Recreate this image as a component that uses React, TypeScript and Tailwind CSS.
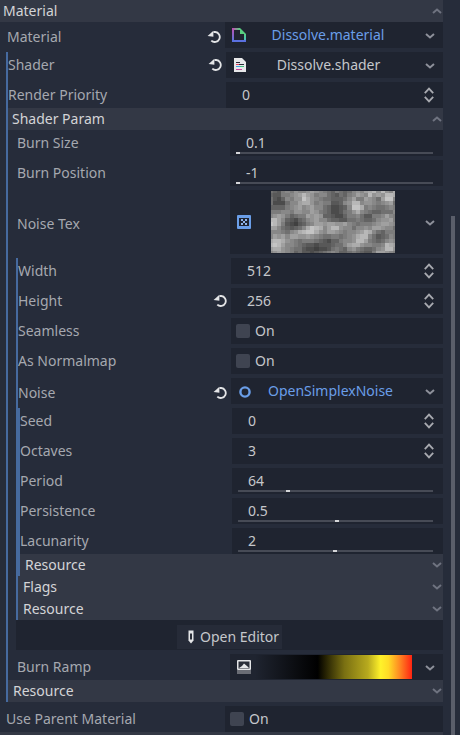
import type { ReactNode } from 'react';

const NOISE = [
  '6547879889a987657656898abc9c98b',
  '5447789aca97886546578a98c9a9ccb',
  '64358799db9876655568a77a986add8',
  '6333688abb9787744589cc8998789a6',
  '5555789a89a886533458ddb78766787',
  '7778879988a9765334679b876556668',
  '89a975677a9a9554335778644778a87',
  'cca85435689a88655446676556899a7',
  'dca74324578aa9aa99a87677789aa98',
  'aa8654568bdcb8acc98868898aa9886',
  '8887689bcddb98aa987889acb865777',
  '8a9a8aa99a98766776789bcc8645687',
  'bccb98767776543557889cca7656898',
  'cdca887654434445668abb988778cba',
  'abb9876643323346765897655689cc9',
  '89a98756443456787556765447aa987',
];

const Field = ({ width, children, className = '' }: { width: string; children?: ReactNode; className?: string }) => (
  <div className={`${width} shrink-0 bg-[#1f2430] ${className}`}>{children}</div>
);

const Reset = ({ className = '' }: { className?: string }) => (
  <svg width="14" height="14" viewBox="0 0 14 14" className={`shrink-0 mr-[4px] ${className}`}>
    <path d="M6.5 2H8.2a5 5 0 1 1-3.9 8.6" fill="none" stroke="#e4e5e7" strokeWidth="1.8" />
    <path d="M6.4 0.8v5.9L0.6 6z" fill="#e4e5e7" />
  </svg>
);

const Down = ({ color = '#8d909a', className = '' }: { color?: string; className?: string }) => (
  <svg width="10" height="6" viewBox="0 0 10 6" className={`shrink-0 ${className}`}>
    <path d="M1 1l4 3.5L9 1" fill="none" stroke={color} strokeWidth="2" />
  </svg>
);

const Up = ({ color = '#6f7380' }: { color?: string }) => (
  <svg width="10" height="6" viewBox="0 0 10 6" className="shrink-0">
    <path d="M1 5l4-3.5L9 5" fill="none" stroke={color} strokeWidth="2" />
  </svg>
);

const Spinner = () => (
  <svg width="10" height="16" viewBox="0 0 10 16" className="shrink-0">
    <path d="M0.8 6.2L5 1.6l4.2 4.6M0.8 9.8L5 14.4l4.2-4.6" fill="none" stroke="#a8aab0" strokeWidth="1.8" />
  </svg>
);

const Row = ({ label, reset, nudge, children }: { label: string; reset?: boolean; nudge?: boolean; children: ReactNode }) => (
  <div className="flex items-center">
    <span className={`flex-1 text-[#a5a8af] ${nudge ? 'translate-y-[2px]' : ''}`}>{label}</span>
    {reset && <Reset className={nudge ? 'translate-y-[2px]' : ''} />}
    {children}
  </div>
);

const Spin = ({ label, width, value, reset }: { label: string; width: string; value: string; reset?: boolean }) => (
  <Row label={label} reset={reset}>
    <Field width={width} className="h-[26px] flex items-center justify-between pl-[16px] pr-[9px] text-[#c5c7cb]">
      <span>{value}</span>
      <Spinner />
    </Field>
  </Row>
);

const Slider = ({ label, width, value, pos }: { label: string; width: string; value: string; pos: number }) => (
  <Row label={label}>
    <Field width={width} className="h-[26px] flex flex-col pl-[6px] pr-[10px] text-[#c5c7cb]">
      <span className="h-[22px] pl-[10px] leading-[26px]">{value}</span>
      <div className="relative h-[2px] bg-[#474b56]">
        <div className="absolute top-0 w-[4px] h-[2px] bg-[#d5d6d9]" style={{ left: pos }} />
      </div>
    </Field>
  </Row>
);

const Check = ({ label, width }: { label: string; width: string }) => (
  <Row label={label}>
    <Field width={width} className="h-[26px] flex items-center gap-[5px] pl-[5px] text-[#c5c7cb]">
      <div className="w-[14px] h-[14px] rounded-[2px] bg-[#3f4451]" />
      <span>On</span>
    </Field>
  </Row>
);

const Picker = ({ label, width, reset, nudge, text, blue, icon, pad }: { label: string; width: string; reset?: boolean; nudge?: boolean; text: string; blue?: boolean; icon: ReactNode; pad: string }) => (
  <Row label={label} reset={reset} nudge={nudge}>
    <Field width={width} className={`h-[26px] flex items-center ${pad} pr-[8px]`}>
      {icon}
      <span className={`flex-1 text-center mr-[15px] ${blue ? 'text-[#6a9ee8]' : 'text-[#c5c7cb]'}`}>{text}</span>
      <Down className="mt-[2px]" />
    </Field>
  </Row>
);

const Section = ({ title, up, className = '' }: { title: string; up?: boolean; className?: string }) => (
  <div className={`h-[22px] flex items-center justify-between bg-[#333845] pr-[1px] text-[#d3d4d7] ${className}`}>
    <span>{title}</span>
    {up ? <Up /> : <Down color="#6f7380" />}
  </div>
);

const MaterialIcon = () => (
  <svg width="14" height="14" viewBox="0 0 14 14" className="shrink-0">
    <defs>
      <linearGradient id="matLeft" x1="0" y1="0" x2="0" y2="1">
        <stop offset="0" stopColor="#c24fb0" />
        <stop offset="1" stopColor="#5078e0" />
      </linearGradient>
      <linearGradient id="matTop" x1="0" y1="0" x2="1" y2="0">
        <stop offset="0" stopColor="#c24fb0" />
        <stop offset="1" stopColor="#58d080" />
      </linearGradient>
      <linearGradient id="matRight" x1="0" y1="0" x2="0" y2="1">
        <stop offset="0" stopColor="#58d080" />
        <stop offset="1" stopColor="#45b8d8" />
      </linearGradient>
    </defs>
    <path d="M0 0h8v2H0z" fill="url(#matTop)" />
    <path d="M0 0h2v14H0z" fill="url(#matLeft)" />
    <path d="M12 6h2v8h-2z" fill="url(#matRight)" />
    <path d="M0 12h14v2H0z" fill="#5a70e0" />
    <path d="M8 0l6 6H8z" fill="#58d080" />
  </svg>
);

const ShaderIcon = () => (
  <svg width="14" height="14" viewBox="0 0 14 14" className="shrink-0">
    <path d="M1 0h8l4 4v10H1z" fill="#e8e8ea" />
    <path d="M3 4h4v1H3z" fill="#2a2a3a" />
    <path d="M3 6h3v1H3z" fill="#e04060" />
    <path d="M6 6h5v1H6z" fill="#2a2a3a" />
    <path d="M3 8h4v1H3z" fill="#40a0e0" />
    <path d="M7 8h4v1H7z" fill="#40c080" />
    <path d="M3 11h6v1H3z" fill="#d040a0" />
  </svg>
);

const TexIcon = () => (
  <svg width="14" height="14" viewBox="0 0 14 14" className="shrink-0">
    <rect width="14" height="14" rx="1" fill="#6a9ee8" />
    <rect x="2" y="3" width="10" height="8" fill="#1f2430" />
    <path d="M4 4h2v2H4zM8 4h2v2H8zM6 6h2v2H6zM4 8h2v2H4zM8 8h2v2H8z" fill="#8fb4ea" />
  </svg>
);

const RingIcon = () => (
  <svg width="12" height="12" viewBox="0 0 12 12" className="shrink-0 mt-[2px]">
    <circle cx="6" cy="6" r="4.6" fill="none" stroke="#6a9ee8" strokeWidth="2.4" />
  </svg>
);

const ImageIcon = () => (
  <svg width="14" height="14" viewBox="0 0 14 14" className="shrink-0">
    <rect width="14" height="10" rx="1" fill="#e4e5e7" />
    <rect y="10" width="14" height="4" fill="#6a6d75" />
    <rect x="1.5" y="1.5" width="11" height="7" fill="#2a2e38" />
    <path d="M2 8l3-2 2-2.5L10 6l2 2z" fill="#e4e5e7" />
  </svg>
);

const Pencil = () => (
  <svg width="6" height="14" viewBox="0 0 6 14" className="shrink-0">
    <path d="M0.5 0.5h5v10L3 13.5 0.5 10.5z" fill="#e4e5e7" />
    <path d="M2 3.5h2v6H2z" fill="#2a2e38" />
  </svg>
);

const NoiseTexture = () => (
  <svg width="124" height="62" viewBox="2 2 120 60" preserveAspectRatio="none" className="shrink-0">
    <defs>
      <filter id="soft" x="-5%" y="-5%" width="110%" height="110%">
        <feGaussianBlur stdDeviation="0.7" />
      </filter>
    </defs>
    <g filter="url(#soft)" shapeRendering="crispEdges">
      {NOISE.map((line, y) =>
        line.split('').map((c, x) => {
          const g = 40 + parseInt(c, 16) * 12;
          return <rect key={`${x}-${y}`} x={x * 4} y={y * 4} width="4" height="4" fill={`rgb(${g},${g},${g})`} />;
        }),
      )}
    </g>
  </svg>
);

export default function App() {
  return (
    <div className="w-[460px] h-[735px] overflow-hidden flex bg-[#262c3a] text-[14px] font-[370] leading-[22px] font-['Noto_Sans',sans-serif]">
      <div className="w-[443px] shrink-0 flex flex-col">
        <Section title="Material" up className="pl-[3px]" />

        <div className="flex flex-col gap-1">
          <div className="pl-[7px]">
            <Picker label="Material" width="w-[218px]" reset nudge blue text="Dissolve.material" icon={<MaterialIcon />} pad="pl-[7px]" />
          </div>

          {/* Shader resource */}
          <div className="ml-[6px] border-l-2 border-[#466a9f] flex flex-col">
            <Picker label="Shader" width="w-[217px]" reset text="Dissolve.shader" icon={<ShaderIcon />} pad="pl-[7px]" />
            <div className="mt-1">
              <Spin label="Render Priority" width="w-[217px]" value="0" />
            </div>
            <Section title="Shader Param" up className="pl-[4px]" />

            <div className="flex flex-col gap-1">
              <div className="pl-[9px] flex flex-col gap-1">
                <Slider label="Burn Size" width="w-[213px]" value="0.1" pos={0} />
                <Slider label="Burn Position" width="w-[213px]" value="-1" pos={0} />
                <Row label="Noise Tex" nudge>
                  <Field width="w-[213px]" className="h-[64px] flex items-center pl-[7px] pr-[8px]">
                    <TexIcon />
                    <div className="w-[20px] shrink-0" />
                    <NoiseTexture />
                    <div className="flex-1" />
                    <Down className="mt-[2px]" />
                  </Field>
                </Row>
              </div>

              {/* Noise texture resource */}
              <div className="ml-[8px] border-l-2 border-[#466a9f] flex flex-col">
                <div className="flex flex-col gap-1">
                  <Spin label="Width" width="w-[212px]" value="512" />
                  <Spin label="Height" width="w-[212px]" value="256" reset />
                  <Check label="Seamless" width="w-[212px]" />
                  <Check label="As Normalmap" width="w-[212px]" />
                  <Picker label="Noise" width="w-[212px]" reset nudge blue text="OpenSimplexNoise" icon={<RingIcon />} pad="pl-[8px]" />

                  <div className="border-l-2 border-[#466a9f] flex flex-col">
                    <div className="flex flex-col gap-1">
                      <Spin label="Seed" width="w-[211px]" value="0" />
                      <Spin label="Octaves" width="w-[211px]" value="3" />
                      <Slider label="Period" width="w-[211px]" value="64" pos={48} />
                      <Slider label="Persistence" width="w-[211px]" value="0.5" pos={97} />
                      <Slider label="Lacunarity" width="w-[211px]" value="2" pos={95} />
                    </div>
                    <Section title="Resource" className="pl-[5px]" />
                  </div>
                </div>
                <Section title="Flags" className="pl-[5px]" />
                <Section title="Resource" className="pl-[5px]" />
              </div>

              <div className="ml-[8px] -mt-1 h-[30px] bg-[#1f2430] flex justify-center pt-[5px]">
                <div className="w-[105px] h-[24px] bg-[#262b38] flex items-center gap-[6px] pl-[11px] text-[#c5c7cb]">
                  <Pencil />
                  <span>Open Editor</span>
                </div>
              </div>

              <div className="pl-[9px]">
                <Row label="Burn Ramp">
                  <Field width="w-[213px]" className="h-[26px] flex items-center pl-[7px] pr-[8px]">
                    <ImageIcon />
                    <div className="w-[4px] shrink-0" />
                    <div className="w-[157px] h-[24px] mr-[13px] shrink-0 bg-[linear-gradient(to_right,#1f2430_0%,#000_40%,#1e1b02_44%,#7a7012_57%,#b8aa1e_72%,#fff22a_80%,#ffdc26_85%,#ff8a22_92%,#ff2412_100%)]" />
                    <Down className="mt-[2px]" />
                  </Field>
                </Row>
              </div>
            </div>
            <Section title="Resource" className="pl-[5px]" />
          </div>

          <div className="pl-[6px]">
            <Check label="Use Parent Material" width="w-[218px]" />
          </div>
        </div>
        <div className="h-[3px] bg-[#333845]" />
      </div>

      <div className="flex-1 pl-[8px] pt-[216px]">
        <div className="w-[4px] h-full bg-[#5a5e6a]" />
      </div>
    </div>
  );
}
